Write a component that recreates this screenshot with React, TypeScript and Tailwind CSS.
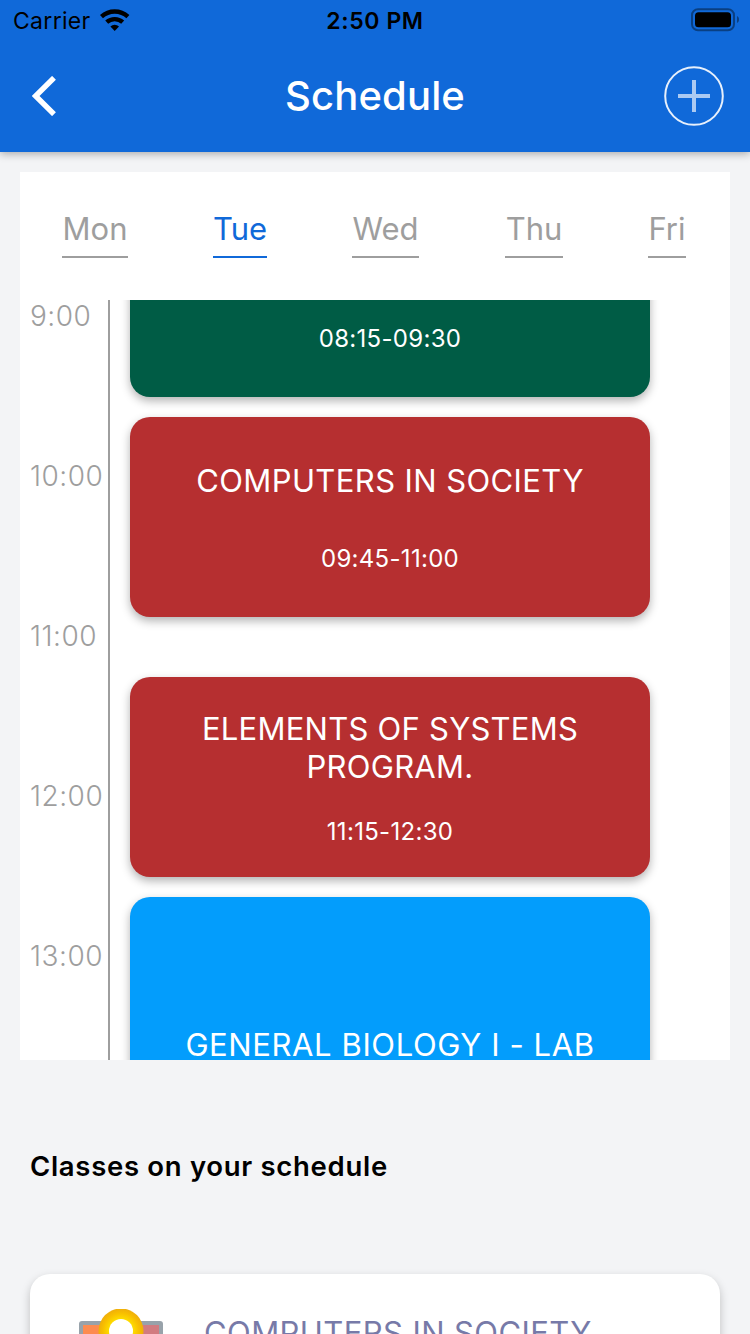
import React from "react";

const days = [
  { name: "Mon", style: "w-[66px] ml-[42px] border-[#9e9e9e] text-[#9e9e9e]" },
  { name: "Tue", style: "w-[54px] ml-[85px] border-[#1069d9] text-[#1069d9]" },
  { name: "Wed", style: "w-[67px] ml-[85px] border-[#9e9e9e] text-[#9e9e9e]" },
  { name: "Thu", style: "w-[58px] ml-[86px] border-[#9e9e9e] text-[#9e9e9e]" },
  { name: "Fri", style: "w-[38px] ml-[85px] border-[#9e9e9e] text-[#9e9e9e]" },
];

const hours = ["9:00", "10:00", "11:00", "12:00", "13:00"];

function StatusBar() {
  return (
    <div className="grid h-10 grid-cols-3 items-center text-[23px] text-black">
      <div className="flex items-center gap-[9px] pl-[13px]">
        <span className="pt-[2px] tracking-[0.3px]">Carrier</span>
        <svg width="30" height="23" viewBox="0 0 30 23" fill="none" stroke="#000" strokeWidth="4.4">
          <path d="M1.5 7.700a19.500 19.500 0 0 1 26.400 0" />
          <path d="M6.700 13.200a11.900 11.900 0 0 1 16 0" />
          <path d="M14.700 22l-4.300-4.400a6.200 6.200 0 0 1 8.600 0z" fill="#000" stroke="none" />
        </svg>
      </div>
      <div className="pt-[2px] text-center font-semibold tracking-[0.6px]">2:50 PM</div>
      <div className="flex justify-end pr-[11px]">
        <svg width="48" height="24" viewBox="0 0 48 24">
          <rect x="1" y="1.300" width="42" height="21" rx="6" fill="none" stroke="#000" strokeOpacity=".4" strokeWidth="2" />
          <rect x="4" y="4.300" width="36" height="15" rx="3.5" />
          <path d="M46 8v7c1.600-1 2-2 2-3.500S47.600 9 46 8z" fillOpacity=".4" />
        </svg>
      </div>
    </div>
  );
}

function Header() {
  return (
    <header className="relative h-[152px] bg-[#1069d9] shadow-[0_2px_8px_rgba(0,0,0,0.3)]">
      <StatusBar />
      <div className="flex h-[112px] items-center justify-between pr-[26px] pl-8 text-white">
        <svg width="60" height="40" viewBox="0 0 60 40" fill="none" stroke="#fff" strokeWidth="5.400">
          <path d="M22 1.800L3.600 20 22 38.200" />
        </svg>
        <h1 className="mr-[6px] text-[40px] leading-[48px] font-[550] tracking-[0.15px]">Schedule</h1>
        <svg width="60" height="60" viewBox="0 0 60 60" fill="none" stroke="#fff">
          <circle cx="30" cy="30" r="28.800" strokeWidth="2" strokeOpacity=".9" />
          <path d="M14 30H28M32 30H46M30 14V46" strokeWidth="4" strokeOpacity=".65" />
        </svg>
      </div>
    </header>
  );
}

interface ClassBlockProps {
  title: React.ReactNode;
  time: string;
  style: string;
}

function ClassBlock({ title, time, style }: ClassBlockProps) {
  return (
    <div className={`flex shrink-0 flex-col items-center justify-center rounded-[20px] text-center text-white shadow-[0_4px_10px_rgba(0,0,0,0.3)] ${style}`}>
      <div className="text-[31px] leading-[38px] whitespace-nowrap">{title}</div>
      <div className="text-[24px] leading-[29px] tracking-[0.3px]">{time}</div>
    </div>
  );
}

export default function App() {
  return (
    <div className="h-[1334px] w-[750px] overflow-hidden bg-[#f3f4f6] font-['Inter','Liberation_Sans',sans-serif]">
      <Header />
      <main className="mt-5">
        <section className="mx-5 h-[888px] bg-white">
          <nav className="flex h-32 pt-[38px]">
            {days.map((day) => (
              <div key={day.name} className={`flex h-12 shrink-0 justify-center border-b-2 text-[31px] leading-[38px] font-normal ${day.style}`}>
                {day.name}
              </div>
            ))}
          </nav>
          <div className="flex h-[760px] overflow-hidden">
            <div className="w-[90px] shrink-0 border-r-2 border-[#9e9e9e]">
              {hours.map((hour) => (
                <div key={hour} className="h-40 pl-[10px] text-[28px] leading-[32px] font-light tracking-[0.5px] text-[#9e9e9e]">
                  {hour}
                </div>
              ))}
            </div>
            <div className="-mt-[103px] ml-5 flex w-[520px] flex-col">
              <ClassBlock title={<>&nbsp;</>} time="08:15-09:30" style="h-[200px] gap-[44px] bg-[#005c45]" />
              <ClassBlock title="COMPUTERS IN SOCIETY" time="09:45-11:00" style="mt-5 h-[200px] gap-[44px] bg-[#b62f30] pt-px tracking-[0.4px]" />
              <ClassBlock title={<>ELEMENTS OF SYSTEMS<br />PROGRAM.</>} time="11:15-12:30" style="mt-[60px] h-[200px] gap-[31px] bg-[#b62f30] pt-px tracking-[0.25px]" />
              <ClassBlock title="GENERAL BIOLOGY I - LAB" time="13:00-15:45" style="mt-5 h-[368px] gap-[44px] bg-[#039dfc] tracking-[0.6px]" />
            </div>
          </div>
        </section>
        <h2 className="mt-[88px] ml-[30px] text-[27.5px] leading-[36px] font-semibold tracking-[0.7px] text-black">Classes on your schedule</h2>
        <article className="mx-[30px] mt-[90px] flex h-[200px] rounded-[20px] bg-white shadow-[0_4px_10px_rgba(0,0,0,0.22)]">
          <svg className="mt-[35px] ml-[49px] shrink-0" width="84" height="84" viewBox="0 0 84 84">
            <defs>
              <radialGradient id="lamp">
                <stop offset="50%" stopColor="#ffe000" />
                <stop offset="80%" stopColor="#f8bf00" />
                <stop offset="100%" stopColor="#efae0b" />
              </radialGradient>
            </defs>
            <rect y="12" width="84" height="60" rx="3" fill="#98a2aa" />
            <rect x="4" y="16" width="38" height="52" fill="#fd8b50" />
            <rect x="42" y="16" width="38" height="52" fill="#d27b80" />
            <circle cx="42" cy="22" r="22.500" fill="url(#lamp)" />
            <circle cx="42" cy="22" r="12" fill="#fff" />
          </svg>
          <div className="mt-[40px] ml-[41px] text-[31px] leading-[38px] font-normal tracking-[0.4px] whitespace-nowrap text-[#777aa8]">COMPUTERS IN SOCIETY</div>
        </article>
      </main>
    </div>
  );
}
